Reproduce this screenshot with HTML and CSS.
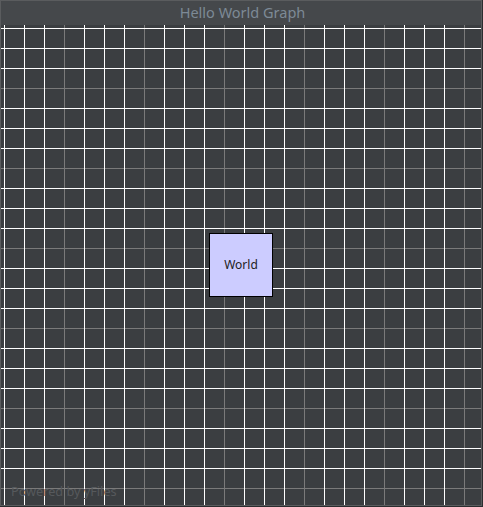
FILE: index.html
```html
<!DOCTYPE html>
<html>
<head>
<meta charset="utf-8">
<link rel="stylesheet" href="styles.css">
</head>
<body>
<div class="window">
  <div class="titlebar">Hello World Graph</div>
  <div class="canvas">
    <div class="node"><span class="label">World</span></div>
    <div class="watermark">Powered by yFiles</div>
  </div>
</div>
</body>
</html>
```
FILE: styles.css
```css
html, body {
  margin: 0;
  padding: 0;
  background: #2b2d2f;
}
.window {
  width: 482px;
  height: 506px;
  box-sizing: border-box;
  border: 1px solid #5a5c5e;
  display: flex;
  flex-direction: column;
  background: #3b3e41;
}
.titlebar {
  height: 24px;
  flex: none;
  background: #45484b;
  color: #7d8a96;
  font-family: "Noto Sans", sans-serif;
  font-size: 14.5px;
  line-height: 22px;
  text-align: center;
  padding-left: 3px;
  box-sizing: border-box;
}
.canvas {
  position: relative;
  flex: 1;
  overflow: hidden;
  background-color: #3b3e41;
  background-image:
    linear-gradient(to right,
      transparent 3px, #ffffff 3px, #ffffff 4px, transparent 4px,
      transparent 23px, #ffffff 23px, #ffffff 24px, transparent 24px,
      transparent 43px, #ffffff 43px, #ffffff 44px, transparent 44px),
    linear-gradient(to bottom,
      transparent 3px, #ffffff 3px, #ffffff 4px, transparent 4px,
      transparent 23px, #ffffff 23px, #ffffff 24px, transparent 24px,
      transparent 43px, #ffffff 43px, #ffffff 44px, transparent 44px),
    linear-gradient(to right, transparent 63px, #7a7a7a 63px, #7a7a7a 64px, transparent 64px),
    linear-gradient(to bottom, transparent 63px, #7a7a7a 63px, #7a7a7a 64px, transparent 64px);
  background-size: 80px 80px;
  background-position: 0 0;
}
.node {
  position: absolute;
  left: 208px;
  top: 208px;
  width: 64px;
  height: 64px;
  box-sizing: border-box;
  border: 1px solid #000000;
  background: #ccccff;
  display: flex;
  align-items: center;
  justify-content: center;
}
.label {
  font-family: "Noto Sans", sans-serif;
  font-size: 12px;
  color: #222222;
  line-height: 14px;
}
.watermark {
  position: absolute;
  left: 10px;
  bottom: 6px;
  font-family: "Noto Sans", sans-serif;
  font-size: 12.7px;
  line-height: 16px;
  color: #56595c;
}
```
